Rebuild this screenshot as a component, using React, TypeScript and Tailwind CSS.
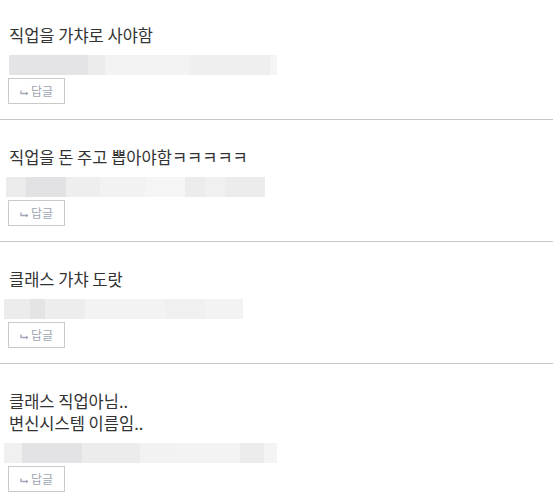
const comments = [
  {
    lines: ["직업을 가챠로 사야함"],
    left: 9,
    segs: [
      [79, "#e4e4e6"],
      [17, "#ececec"],
      [85, "#f3f3f3"],
      [80, "#efefef"],
      [7, "#f5f5f5"],
    ],
  },
  {
    lines: ["직업을 돈 주고 뽑아야함ㅋㅋㅋㅋㅋ"],
    left: 6,
    segs: [
      [20, "#ebebeb"],
      [40, "#e2e2e4"],
      [34, "#eeeeee"],
      [45, "#f2f2f2"],
      [40, "#f5f5f5"],
      [20, "#ececec"],
      [20, "#f0f0f0"],
      [40, "#ececec"],
    ],
  },
  {
    lines: ["클래스 가챠 도랏"],
    left: 4,
    segs: [
      [26, "#ececec"],
      [15, "#e4e4e4"],
      [40, "#ededed"],
      [80, "#f3f3f3"],
      [40, "#f0f0f0"],
      [38, "#f3f3f3"],
    ],
  },
  {
    lines: ["클래스 직업아님..", "변신시스템 이름임.."],
    left: 4,
    segs: [
      [18, "#f0f0f0"],
      [60, "#e3e3e5"],
      [58, "#ececec"],
      [35, "#f2f2f2"],
      [65, "#f3f3f3"],
      [24, "#ececec"],
      [13, "#f4f4f4"],
    ],
  },
];

function ReplyArrow() {
  return (
    <svg width="9" height="6" viewBox="0 0 9 6" className="mr-[2px] mt-[3px]">
      <path d="M1 0.5V3.5H7.5" fill="none" stroke="#9ea7b3" strokeWidth="1.3" />
      <path d="M6 1.8L8.5 3.5L6 5.2Z" fill="#9ea7b3" />
    </svg>
  );
}

export default function App() {
  return (
    <div className="w-[553px] h-[502px] overflow-hidden bg-white font-['Noto_Sans_CJK_KR',sans-serif]">
      {comments.map((c, i) => (
        <div
          key={i}
          className="border-b border-[#c8c8c8] pt-[26px] pb-[15px] first:pt-[24px] last:border-b-0"
        >
          <div className="pl-[9px] text-[16.5px] leading-[22px] text-[#333]">
            {c.lines.map((l, j) => (
              <p key={j}>{l}</p>
            ))}
          </div>
          <div className="mt-[9px] flex h-[20px]" style={{ marginLeft: c.left }}>
            {c.segs.map(([w, col], k) => (
              <div key={k} style={{ width: w as number, background: col as string }} />
            ))}
          </div>
          <button className="ml-[8px] mt-[3px] flex h-[26px] w-[57px] items-center justify-center border border-[#cacaca] bg-white text-[12px] text-[#9ea7b3]">
            <ReplyArrow />
            답글
          </button>
        </div>
      ))}
    </div>
  );
}
